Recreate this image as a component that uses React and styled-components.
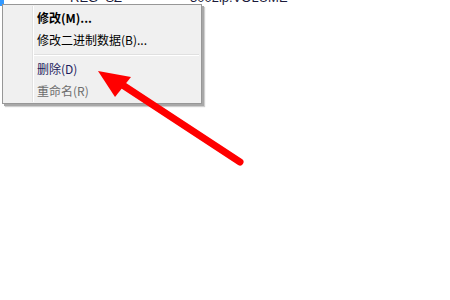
import styled, { createGlobalStyle } from "styled-components";

const GlobalStyle = createGlobalStyle`
  html, body {
    margin: 0;
    padding: 0;
    background: #ffffff;
  }
  body {
    width: 450px;
    height: 300px;
    overflow: hidden;
    font-family: "Noto Sans CJK SC", "Noto Sans", sans-serif;
  }
`;

const Stage = styled.div`
  position: relative;
  width: 450px;
  height: 300px;
  overflow: hidden;
`;

const ListRow = styled.div`
  display: flex;
  height: 12px;
  margin-top: -8px;
  font-family: "Liberation Sans", sans-serif;
  font-size: 13px;
  line-height: 12px;
  color: #1a1a3a;
`;

const Selection = styled.div`
  width: 4px;
  height: 14px;
  background: #3399ff;
`;

const Cell = styled.span`
  width: ${(p) => p.$w}px;
  padding-left: ${(p) => p.$pad || 0}px;
`;

const Menu = styled.div`
  position: absolute;
  left: 2px;
  top: 4px;
  width: 198px;
  padding: 2px 0 1px;
  background: #f0f0f0;
  border: 1px solid #979797;
  box-shadow: 2px 2px 0 0 #a8a8a8, 3px 3px 1px 0 #cfcfcf;
`;

const Gutter = styled.div`
  position: absolute;
  left: 29px;
  top: 1px;
  bottom: 1px;
  width: 1px;
  background: #e2e2e2;
  border-right: 1px solid #ffffff;
`;

const Item = styled.div`
  height: 22px;
  line-height: 22px;
  padding-left: 34px;
  font-size: 12px;
  font-weight: ${(p) => (p.$bold ? 700 : 400)};
  color: ${(p) => p.$color || "#000000"};
  white-space: nowrap;
`;

const Separator = styled.div`
  height: 7px;
  display: flex;
  align-items: center;
  padding-left: 31px;
  padding-right: 2px;
  &::before {
    content: "";
    flex: 1;
    height: 1px;
    background: #e0e0e0;
    border-bottom: 1px solid #ffffff;
  }
`;

const Arrow = styled.svg`
  position: absolute;
  left: 0;
  top: 0;
  width: 450px;
  height: 300px;
  pointer-events: none;
`;

export default function App() {
  return (
    <Stage>
      <GlobalStyle />
      <ListRow>
        <Selection />
        <Cell $w={66} />
        <Cell $w={120}>REG_SZ</Cell>
        <Cell $w={200}>3002ip.VOLUME</Cell>
      </ListRow>
      <Menu>
        <Gutter />
        <Item $bold>修改(M)...</Item>
        <Item>修改二进制数据(B)...</Item>
        <Separator />
        <Item $color="#1c1c5c">删除(D)</Item>
        <Item $color="#6d6d6d">重命名(R)</Item>
      </Menu>
      <Arrow viewBox="0 0 450 300">
        <line
          x1="240"
          y1="162"
          x2="118"
          y2="82"
          stroke="#ff0000"
          strokeWidth="7"
          strokeLinecap="round"
        />
        <polygon points="98,71 131,77 115,97" fill="#ff0000" />
      </Arrow>
    </Stage>
  );
}
